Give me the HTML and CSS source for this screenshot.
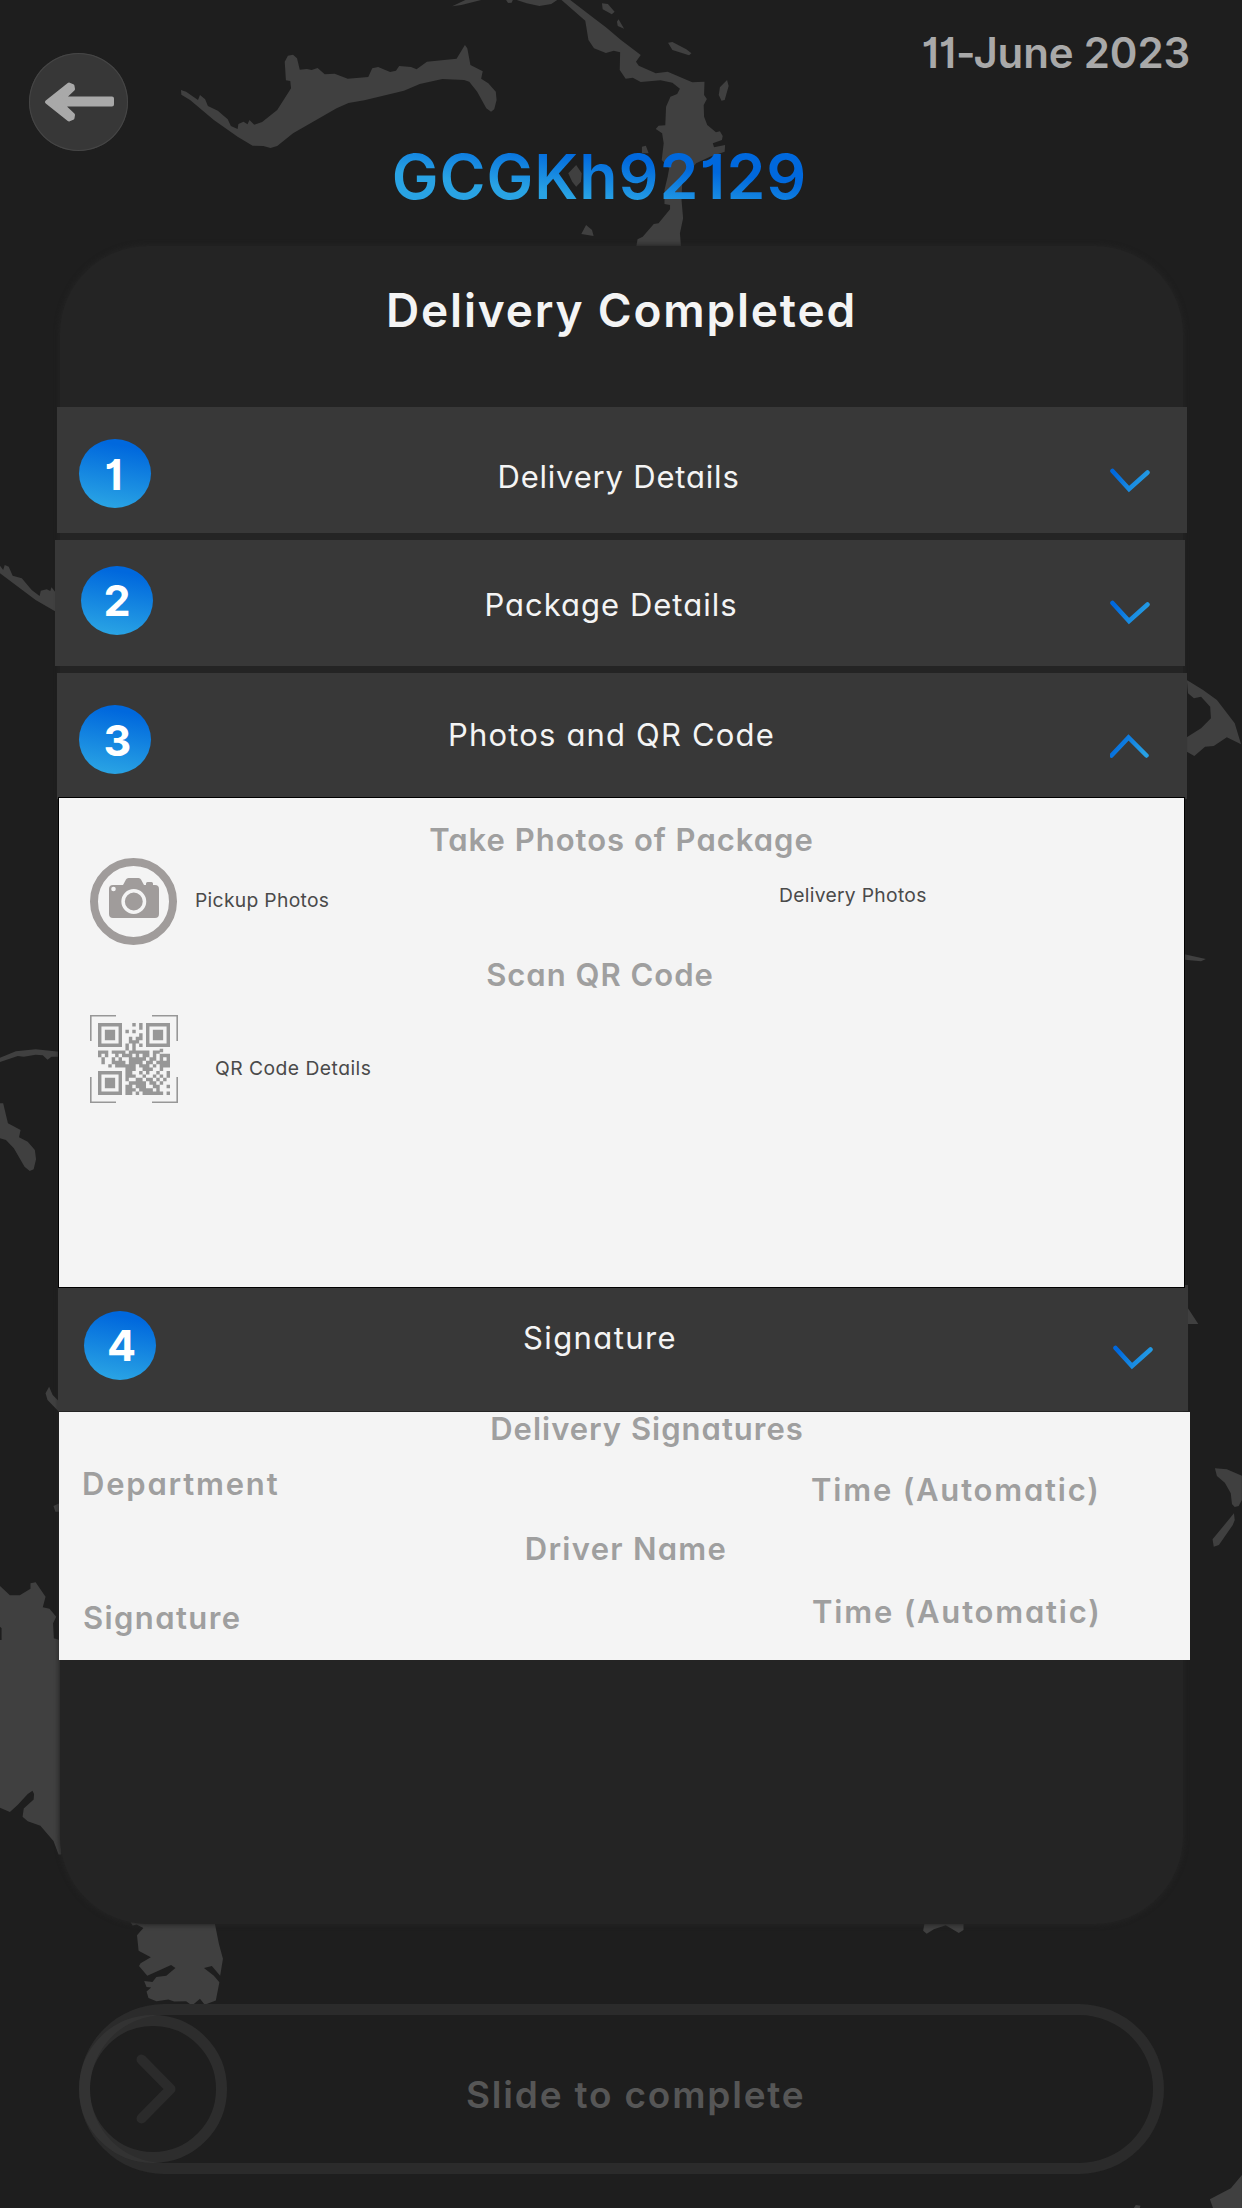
FILE: index.html
```html
<!DOCTYPE html>
<html lang="en">
<head>
<meta charset="utf-8">
<title>Delivery Completed</title>
<link rel="stylesheet" href="styles.css">
</head>
<body>
<svg class="map" viewBox="0 0 1242 2208" aria-hidden="true">
  <g transform="scale(.396 .33333)">
    <path d="M457 270L470 275 500 300 505 285 518 298 525 318 550 332 575 358 583 378 600 387 602 372 615 365 625 373 630 360 642 374 662 366 700 330 735 265 733 243 722 241 719 185 727 167 740 164 750 175 757 209 775 207 787 210 802 204 820 223 845 221 878 236 930 231 940 205 955 201 985 216 1000 212 1008 198 1038 201 1052 208 1078 185 1153 176 1174 135 1180 145 1188 195 1219 214 1215 236 1233 250 1252 275 1254 300 1248 328 1240 335 1228 325 1205 275 1185 245 1172 240 1117 237 1060 252 1020 272 920 301 880 309 850 325 740 400 700 438 683 444 665 438 638 437 600 410 540 360 480 300 458 284Z"/>
    <path d="M1142 19L1175 0H1215L1165 15ZM1278 0L1283 9 1292 8 1295 0ZM1305 0L1330 10 1362 18 1392 12 1407 0ZM1520 10L1535 12 1552 35 1545 43 1522 28ZM1558 65L1562 58 1576 86 1560 78ZM1455 495L1469 520 1467 545 1455 560 1445 545 1435 520ZM1480 675L1495 690 1499 708 1468 702Z"/>
    <path d="M1418 0L1478 62 1486 120 1500 145 1530 159 1550 152 1566 157 1565 210 1580 236 1598 233 1618 246 1668 241 1698 248 1717 266 1710 282 1693 290 1682 320 1680 376 1663 377 1656 387 1672 400 1676 430 1671 480 1690 505 1686 530 1678 570V612L1692 615V628L1663 670 1651 672 1623 710 1610 718 1606 745H1720L1717 700 1725 655 1721 600 1723 540 1758 490 1793 470 1830 455 1831 435 1803 442 1800 430 1823 420 1825 408 1818 394 1808 397 1786 375 1778 350 1777 315 1785 297 1778 285 1779 245 1748 247 1686 215 1656 220 1613 197 1606 185 1618 165 1568 120 1530 82 1500 55 1440 0Z"/>
    <path d="M1687 128L1698 126 1733 148 1746 160 1740 166 1698 150ZM1836 240L1840 258 1830 300 1822 302 1815 285 1818 262ZM1621 440L1631 437 1638 460H1621Z"/>
  </g>
  <g transform="translate(0 400) scale(.396 .33333)">
    <path d="M0 497L8 510 12 495 22 500 32 527 55 535 80 570 100 588 103 572 118 568 127 573 130 562 139 575V634L90 600 0 520Z"/>
    <path d="M2997 840L3038 870 3073 900 3118 970 3134 1033 3098 1012 3065 1038 3043 1040 3016 1068 2997 1055V1012L3033 985 3058 955 3056 920 3033 890 3015 895 3000 880Z"/>
  </g>
  <g transform="translate(0 790) scale(.396 .33333)">
    <path d="M0 803L40 784 90 778 150 785V800H130L120 809 108 796 90 794 60 800 45 798 0 816ZM0 940H8L20 1000 52 1020 48 1042 70 1055 88 1080 91 1108 85 1138 75 1143 62 1130 35 1075 15 1050 0 1045ZM2991 493L3045 507 3033 514 2991 509ZM3000 1555L3026 1602H3000Z"/>
  </g>
  <g transform="translate(0 1200) scale(.396 .33333)">
    <path d="M115 580L124 560 133 585 150 605V637L120 600ZM135 918L150 910V935H140ZM0 1158L25 1186H50L77 1166V1150L90 1147 115 1190 108 1222 125 1226 142 1250 134 1270 136 1315 150 1320V1460H0V1420L4 1410 0 1395V1355L4 1345V1285L0 1280ZM3068 805L3098 808 3136 827V900L3128 918 3118 921 3111 912 3108 880 3093 848 3073 828ZM3116 940L3118 960 3113 975 3078 1035 3065 1040 3062 1018Z"/>
  </g>
  <g transform="translate(0 1640) scale(.396 .3623)">
    <path d="M0 0H155V592H148L135 555 102 513 70 500 57 488 60 465 85 440 86 425 82 416 70 425 45 455 25 475 0 463ZM325 770H540L543 785 553 840 563 880 556 927 535 900 515 905 540 927 554 945 545 995 517 1007 505 990 485 1009 470 997 440 998 425 992 395 997 375 988 370 970 382 959 370 958 364 941 385 944 395 930 420 927 443 905 432 897 372 927 351 900 355 892 381 876 350 858 346 815 362 795 345 785 335 788Z"/>
  </g>
  <g transform="translate(621 1780) scale(.396 .33333)">
    <path d="M767 425H865V450L853 459 820 436 790 448 772 461 763 452ZM1568 1185L1540 1225 1487 1258 1495 1284H1568ZM1295 1284L1300 1275 1312 1277 1310 1284Z"/>
  </g>
</svg>

<svg class="defs" aria-hidden="true">
  <linearGradient id="blue" x1="0" x2="1" y1="0.3" y2="0.6"><stop offset="0" stop-color="#0068dd"/><stop offset="1" stop-color="#27a0e4"/></linearGradient>
</svg>

<main class="screen">
  <header class="top">
    <button class="back" aria-label="Back">
      <svg viewBox="0 0 99 98"><path d="M18 49L40 31.500 43.500 33 44 36 35 44.500 38 45.500H83V51.500H38L35 53.500 44 62 43.500 65 40 66.500Z"/></svg>
    </button>
    <time class="date">11-June 2023</time>
  </header>
  <h1 class="code"><span>GCGKh92129</span></h1>

  <section class="card">
    <h2 class="status"><span>Delivery Completed</span></h2>

    <div class="row row-1">
      <span class="badge">1</span><span class="label">Delivery Details</span>
      <svg class="chev" viewBox="0 0 40 25"><path d="M2.5 3L19 21 37.500 4.500"/></svg>
    </div>
    <div class="row row-2">
      <span class="badge">2</span><span class="label">Package Details</span>
      <svg class="chev" viewBox="0 0 40 25"><path d="M2.500 3L19 21 37.500 4.500"/></svg>
    </div>
    <div class="row row-3">
      <span class="badge">3</span><span class="label">Photos and QR Code</span>
      <svg class="chev" viewBox="0 0 40 25"><path d="M1.500 21.500L18.500 3.500 36.500 21.500"/></svg>
    </div>
    <div class="panel photos">
      <h3 class="heading take">Take Photos of Package</h3>
      <div class="photo-line">
        <svg class="camera" viewBox="0 0 87 87">
          <circle cx="43.500" cy="43.500" r="39.500"/>
          <path d="M23 27H33L36 21.500Q36.700 20 38.500 20H48.500Q50.300 20 51 21.500L54 27H56V25.500Q56 24 57.500 24H61.500Q63 24 63 25.500V27H65Q69 27 69 31V56Q69 60 65 60H23Q19 60 19 56V31Q19 27 23 27Z"/>
          <circle class="lens" cx="43.800" cy="43.500" r="10.700"/>
          <circle class="dot" cx="23.500" cy="31" r="2.300"/>
        </svg>
        <span class="small pickup">Pickup Photos</span>
        <span class="small delivery">Delivery Photos</span>
      </div>
      <h3 class="heading scan">Scan QR Code</h3>
      <div class="qr-line">
        <svg class="qr" viewBox="0 0 88 88">
          <path class="frame" d="M26 .8H.8V26M62 .8H87.200V26M26 87.200H.8V62M62 87.200H87.200V62"/>
          <g transform="translate(8 8) scale(3.4286)">
            <path class="eye" d="M.5 .5h6v6h-6zM14.500 .5h6v6h-6zM.5 14.500h6v6h-6z"/>
            <path class="fill" d="M2 2h3v3H2zM16 2h3v3h-3zM2 16h3v3H2z"/>
            <path d="M10 .5h1M12 .5h1M12 1.500h1M8 2.500h1M10 2.500h1M12 3.500h1M9 4.500h1M11 4.500h2M9 5.500h3M8 6.500h1M10 6.500h1M12 6.500h1M8 7.500h1M10 7.500h1M0 8.500h3M4 8.500h4M9 8.500h6M16 8.500h2M18 8h1M0 9.500h1M2 9.500h1M5 9.500h1M7 9.500h3M11 9.500h1M13 9.500h2M16 9.500h1M18 9.500h3M1 10.500h1M4 10.500h1M6 10.500h1M9 10.500h2M11 10.500h3M15 10.500h2M18 10.500h1M20 10.500h1M1 11.500h1M4 11.500h4M9 11.500h4M14 11.500h2M17 11.500h4M3 12.500h1M5 12.500h6M12 12.500h3M16 12.500h1M18 12.500h3M8 13.500h3M13 13.500h3M18 13.500h1M8 14.500h2M12 14.500h1M14 14.500h1M17 14.500h1M20 14.500h1M8 15.500h3M13 15.500h1M16 15.500h1M18 15.500h1M20 15.500h1M8 16.500h1M11 16.500h2M14 16.500h2M17 16.500h1M19 16.500h1M9 17.500h2M11 17.500h3M15 17.500h1M16 17.500h1M18 17.500h1M8 18.500h2M11 18.500h1M12 18.500h2M16 18.500h2M20 18.500h1M8 19.500h3M12 19.500h2M14 19.500h2M17 19.500h1M8 20.500h2M11 20.500h1M13 20.500h6M20 20.500h1"/>
          </g>
        </svg>
        <span class="small qr-text">QR Code Details</span>
      </div>
    </div>
    <div class="row row-4">
      <span class="badge">4</span><span class="label">Signature</span>
      <svg class="chev" viewBox="0 0 40 25"><path d="M2.500 3L19 21 37.500 4.500"/></svg>
    </div>
    <div class="panel signatures">
      <h3 class="heading sign">Delivery Signatures</h3>
      <div class="pair first"><span class="heading dept">Department</span><span class="heading time">Time (Automatic)</span></div>
      <h3 class="heading driver">Driver Name</h3>
      <div class="pair second"><span class="heading name">Signature</span><span class="heading time">Time (Automatic)</span></div>
    </div>
  </section>

  <div class="slider">
    <span class="knob"><svg viewBox="0 0 126 126"><path d="M51.500 33.500L80.500 63 51.500 92.500"/></svg></span>
    <span class="slide-text">Slide to complete</span>
  </div>
</main>
</body>
</html>
```
FILE: styles.css
```css
* { box-sizing: border-box; }
body {
  margin: 0;
  width: 1242px;
  height: 2208px;
  position: relative;
  overflow: hidden;
  background: #1e1e1e;
  font-family: Inter, "Open Sans", sans-serif;
  font-feature-settings: "cv11", "cv01";
  white-space: nowrap;
}
h1, h2, h3 { margin: 0; }
svg { display: block; }
.map { position: absolute; inset: 0; width: 1242px; height: 2208px; fill: #404040; }
.defs { position: absolute; width: 0; height: 0; }
.screen { position: relative; display: flex; flex-direction: column; }

.top { display: flex; justify-content: space-between; height: 138px; padding: 27px 52px 0 29px; }
.back {
  width: 99px; height: 98px; margin-top: 26px; padding: 0;
  border: 0; border-radius: 50%; background: #373737;
  box-shadow: inset 0 0 0 1px #464646;
}
.back svg { width: 99px; height: 98px; fill: #a9a9a9; stroke: #a9a9a9; stroke-width: 4; stroke-linejoin: round; }
.date { font-size: 42px; line-height: 52px; font-weight: 600; letter-spacing: -.15px; color: #a9a9a9; }

.code { height: 108px; padding-right: 43px; text-align: center; font-size: 62.500px; line-height: 76px; font-weight: 600; letter-spacing: 1px; }
.code span { background: linear-gradient(188deg, #0068dd 35%, #29a3e4 68%); -webkit-background-clip: text; background-clip: text; color: transparent; }

.card {
  width: 1123px; height: 1678px; margin-left: 60px;
  border-radius: 88px; background: #242424; box-shadow: 0 0 5px 1px #242424;
  display: flex; flex-direction: column;
}
.status { height: 161px; padding-top: 34px; text-align: center; font-size: 46px; line-height: 60px; font-weight: 600; letter-spacing: 1.800px; color: #f4f4f4; }

.row {
  flex: none; width: 1130px; height: 126px; margin: 0 0 7px -3px;
  display: grid; grid-template-columns: 98px 1fr 98px; align-items: start;
  background: #383838;
}
.badge {
  width: 72px; height: 69px; margin: 32px 0 0 22px; border-radius: 50%;
  background: linear-gradient(190deg, #0068dd 14%, #29a3e4 92%);
  color: #fff; font-size: 43px; line-height: 70px; font-weight: 700; text-align: center;
}
.label { text-align: center; font-size: 31px; line-height: 40px; color: #f4f4f4; }
.chev {
  width: 40px; height: 25px; margin-top: 61px; margin-right: 37px; justify-self: end;
  fill: none; stroke: url(#blue); stroke-width: 4.5; stroke-linecap: round;
}
.row-1 .badge { padding-right: 3px; }
.row-1 .label { margin-top: 50px; padding-right: 7px; letter-spacing: .8px; }
.row-2 { margin-left: -5px; }
.row-2 .badge { margin: 26px 0 0 26px; line-height: 68px; }
.row-2 .label { margin-top: 45px; padding-right: 18px; letter-spacing: 1px; }
.row-2 .chev { margin-top: 60px; margin-right: 35px; }
.row-3 { margin-bottom: -2px; }
.row-3 .badge { padding-left: 5px; }
.row-3 .label { margin-top: 42px; padding-right: 21px; letter-spacing: 1.170px; }
.row-4 { margin: -3px 0 1px -2px; }
.row-4 .badge { margin: 26px 0 0 26px; padding-left: 3px; line-height: 68px; }
.row-4 .label { margin-top: 33px; padding-right: 46px; letter-spacing: 1.400px; }
.row-4 .chev { margin-top: 60px; margin-right: 35px; }

.panel { flex: none; background: #f4f4f4; color: #9f9f9f; }
.heading { font-size: 31px; font-weight: 600; line-height: 36px; text-align: center; letter-spacing: 1px; }
.small { font-size: 19.300px; line-height: 24px; letter-spacing: .3px; color: #4a4a4a; }

.photos { width: 1127px; height: 491px; margin-left: -2px; border: 1px solid #000; padding-top: 24px; z-index: 1; }
.photo-line { display: grid; grid-template-columns: 136px 584px 1fr; height: 87px; }
.camera { width: 87px; height: 87px; margin-left: 31px; fill: #a09c9b; }
.camera circle { fill: none; stroke: #a09c9b; stroke-width: 8; }
.camera .lens { fill: #a09c9b; stroke: #f4f4f4; stroke-width: 3.5; }
.camera .dot { fill: #f4f4f4; stroke: none; }
.pickup { padding-top: 30px; }
.delivery { padding-top: 25px; }
.scan { margin-top: 12px; padding-right: 43px; }
.qr-line { display: flex; margin-top: 22px; padding-left: 31px; }
.qr { width: 88px; height: 88px; fill: none; stroke: #979797; stroke-width: 1; }
.qr .frame { stroke-width: 1.600; }
.qr .fill { fill: #979797; stroke: none; }
.qr-text { margin: 41px 0 0 37px; letter-spacing: .47px; }

.signatures { width: 1131px; height: 248px; margin-left: -1px; }
.signatures .heading { line-height: 34px; }
.sign { padding-left: 45px; }
.pair { display: grid; grid-template-columns: 729px 1fr; }
.pair .heading { text-align: left; letter-spacing: 1.800px; }
.first { margin-top: 21px; padding-left: 23px; }
.first .time { margin-top: 6px; }
.signatures .driver { margin-top: 25px; padding-left: 3px; letter-spacing: 1.280px; }
.second { margin-top: 29px; padding-left: 24px; }
.second .name { margin-top: 6px; letter-spacing: 1.400px; }

.slider {
  width: 1085px; height: 170px; margin: 80px 0 0 79px;
  display: flex; border-radius: 85px; box-shadow: inset 0 0 0 11px #2b2b2b;
}
.knob { width: 148px; height: 148px; margin-top: 11px; border: 11px solid rgba(60, 60, 60, .5); border-radius: 50%; }
.knob svg { width: 126px; height: 126px; fill: none; stroke: #2b2b2b; stroke-width: 10; stroke-linecap: round; stroke-linejoin: round; }
.slide-text { margin: 66px 0 0 239px; font-size: 37px; line-height: 50px; font-weight: 600; letter-spacing: 1.800px; color: #565656; }
```
